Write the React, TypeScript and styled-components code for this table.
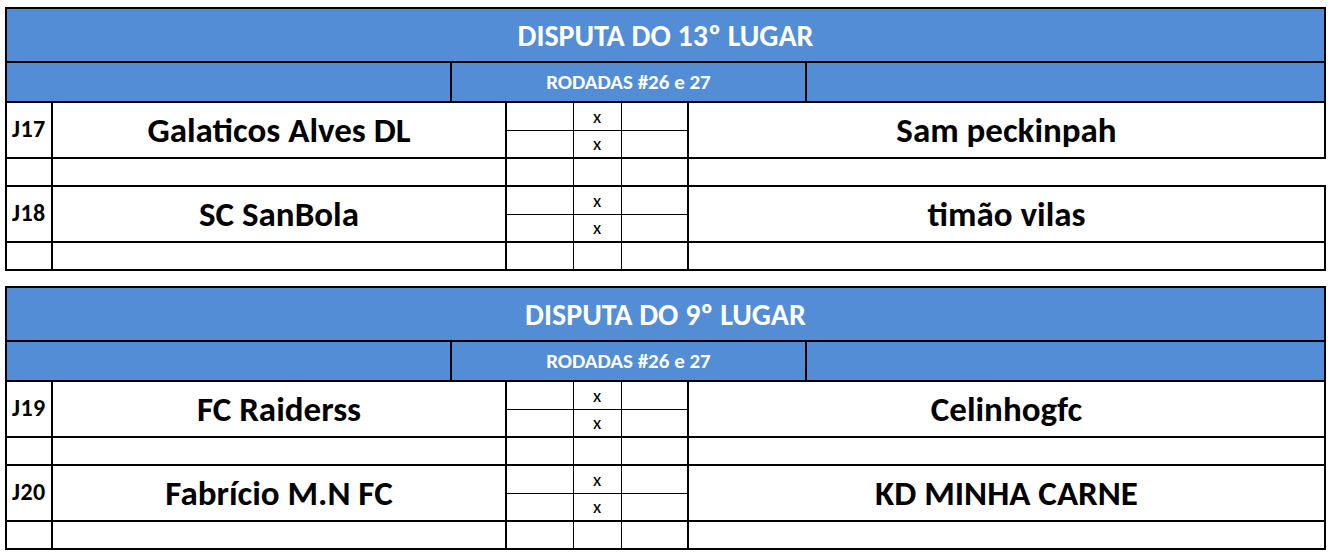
import { Fragment } from 'react';
import styled, { createGlobalStyle } from 'styled-components';

interface Match {
  id: string;
  home: string;
  away: string;
  openRight?: boolean;
}

interface Bracket {
  title: string;
  round: string;
  matches: Match[];
}

const brackets: Bracket[] = [
  {
    title: 'DISPUTA DO 13º LUGAR',
    round: 'RODADAS #26 e 27',
    matches: [
      { id: 'J17', home: 'Galaticos Alves DL', away: 'Sam peckinpah', openRight: true },
      { id: 'J18', home: 'SC SanBola', away: 'timão vilas' },
    ],
  },
  {
    title: 'DISPUTA DO 9º LUGAR',
    round: 'RODADAS #26 e 27',
    matches: [
      { id: 'J19', home: 'FC Raiderss', away: 'Celinhogfc' },
      { id: 'J20', home: 'Fabrício M.N FC', away: 'KD MINHA CARNE' },
    ],
  },
];

const App = () => {
  return (
    <>
      <GlobalStyle />
      <S.Page>
        {brackets.map((b) => (
          <S.Block key={b.title}>
            <S.TitleBar>{b.title}</S.TitleBar>
            <S.SubBar>
              <S.SubCell />
              <S.SubCell $divider>{b.round}</S.SubCell>
              <S.SubCell $divider />
            </S.SubBar>
            <S.Grid>
              <colgroup>
                <col style={{ width: 46 }} />
                <col style={{ width: 454 }} />
                <col style={{ width: 67 }} />
                <col style={{ width: 48 }} />
                <col style={{ width: 67 }} />
                <col />
              </colgroup>
              <tbody>
                {b.matches.map((m) => (
                  <Fragment key={m.id}>
                    <S.Row>
                      <S.IdCell rowSpan={2}>{m.id}</S.IdCell>
                      <S.TeamCell rowSpan={2}>{m.home}</S.TeamCell>
                      <S.ScoreCell $half="top" />
                      <S.ScoreCell $half="top">x</S.ScoreCell>
                      <S.ScoreCell $half="top" />
                      <S.TeamCell rowSpan={2}>{m.away}</S.TeamCell>
                    </S.Row>
                    <S.Row>
                      <S.ScoreCell $half="bottom" />
                      <S.ScoreCell $half="bottom">x</S.ScoreCell>
                      <S.ScoreCell $half="bottom" />
                    </S.Row>
                    <S.Row>
                      <S.BlankCell />
                      <S.BlankCell />
                      <S.ScoreCell />
                      <S.ScoreCell />
                      <S.ScoreCell />
                      <S.BlankCell $open={m.openRight} />
                    </S.Row>
                  </Fragment>
                ))}
              </tbody>
            </S.Grid>
          </S.Block>
        ))}
      </S.Page>
    </>
  );
};

const GlobalStyle = createGlobalStyle`
  body {
    margin: 0;
    background: #ffffff;
    font-family: 'Carlito', 'Lato', 'Liberation Sans', sans-serif;
  }
`;

const S = {
  Page: styled.div`
    display: flex;
    flex-direction: column;
    gap: 15px;
    width: 1321px;
    padding: 7px 0 0 5px;
  `,
  Block: styled.section`
    display: flex;
    flex-direction: column;
  `,
  TitleBar: styled.div`
    height: 52px;
    border: 2px solid #000;
    border-bottom: none;
    background: #538dd5;
    color: #ffffff;
    font-weight: 700;
    font-size: 30px;
    display: flex;
    align-items: center;
    justify-content: center;
  `,
  SubBar: styled.div`
    height: 38px;
    border: 2px solid #000;
    border-bottom: none;
    background: #538dd5;
    display: grid;
    grid-template-columns: 443px 355px 1fr;
  `,
  SubCell: styled.div<{ $divider?: boolean }>`
    border-left: ${(p) => (p.$divider ? '2px solid #000' : 'none')};
    color: #ffffff;
    font-weight: 700;
    font-size: 21px;
    display: flex;
    align-items: center;
    justify-content: center;
  `,
  Grid: styled.table`
    width: 1321px;
    border-collapse: collapse;
    table-layout: fixed;
    color: #000;
  `,
  Row: styled.tr`
    height: 28px;
  `,
  IdCell: styled.td`
    border: 2px solid #000;
    padding: 0 0 3px 5px;
    font-weight: 700;
    font-size: 24px;
    letter-spacing: 0.5px;
    text-align: left;
    vertical-align: middle;
  `,
  TeamCell: styled.td`
    border: 2px solid #000;
    padding: 0;
    font-weight: 700;
    font-size: 35px;
    text-align: center;
    vertical-align: middle;
  `,
  ScoreCell: styled.td<{ $half?: 'top' | 'bottom' }>`
    border: 2px solid #000;
    border-left-width: 1px;
    border-right-width: 1px;
    border-top-width: ${(p) => (p.$half === 'bottom' ? '1px' : '2px')};
    border-bottom-width: ${(p) => (p.$half === 'top' ? '1px' : '2px')};
    padding: 0;
    font-size: 19px;
    line-height: 1;
    text-align: center;
    vertical-align: middle;
  `,
  BlankCell: styled.td<{ $open?: boolean }>`
    border: 2px solid #000;
    border-right-style: ${(p) => (p.$open ? 'none' : 'solid')};
    padding: 0;
  `,
};

export default App;
